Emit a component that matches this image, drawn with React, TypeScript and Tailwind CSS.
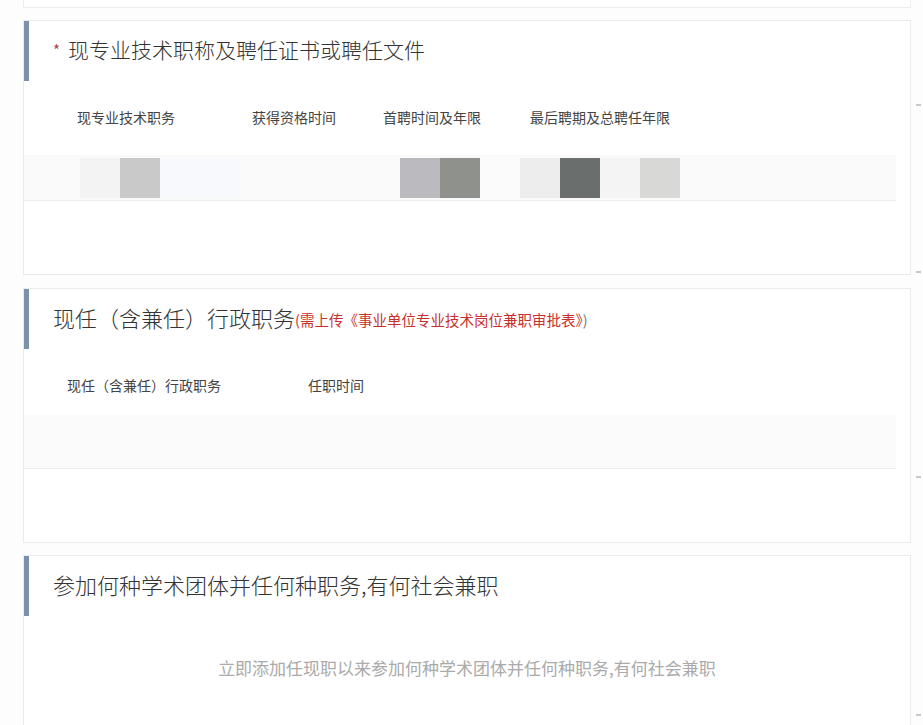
const font = { fontFamily: '"Noto Sans CJK SC", "Liberation Sans", sans-serif' };

function SectionTitle({ children }: { children: React.ReactNode }) {
  return (
    <div className="flex h-[60px] items-center border-l-[5px] border-[#7d91aa] pb-[4px] pl-[24px]">
      {children}
    </div>
  );
}

const mosaic = [
  { w: 56, c: "#fafafa" },
  { w: 40, c: "#f3f3f3" },
  { w: 40, c: "#c9c9c9" },
  { w: 80, c: "#f8f9fc" },
  { w: 160, c: "#fafafa" },
  { w: 40, c: "#bbbabe" },
  { w: 40, c: "#8e918c" },
  { w: 40, c: "#fbfbfb" },
  { w: 40, c: "#ededed" },
  { w: 40, c: "#6a6f6d" },
  { w: 40, c: "#f4f4f4" },
  { w: 40, c: "#d8d9d6" },
];

export default function App() {
  return (
    <div className="relative min-h-screen bg-[#fdfdfd] pl-[23px] pr-[13px]" style={font}>
      {/* cut-off card above */}
      <div className="h-[8px] w-[888px] border-x border-b border-[#ececec] bg-white" />

      {/* professional title */}
      <div className="mt-[12px] box-border h-[255px] w-[888px] border border-[#ebebeb] bg-white">
        <SectionTitle>
          <span className="mr-[8px] text-[15px] leading-none text-[#a94442]">*</span>
          <span className="text-[21px] font-light leading-none text-[#333]">现专业技术职称及聘任证书或聘任文件</span>
        </SectionTitle>
        <div className="mt-[16px] flex h-[40px] items-center text-[14px] text-[#444]">
          <div className="w-[228px] pl-[53px]">现专业技术职务</div>
          <div className="w-[131px]">获得资格时间</div>
          <div className="w-[147px]">首聘时间及年限</div>
          <div>最后聘期及总聘任年限</div>
        </div>
        <div className="mt-[18px] flex h-[46px] w-[872px] items-center border-b border-[#ececec] bg-[#fafafa]">
          {mosaic.map((m, i) => (
            <div key={i} className="h-[40px]" style={{ width: m.w, background: m.c }} />
          ))}
        </div>
      </div>

      {/* administrative post */}
      <div className="mt-[13px] box-border h-[255px] w-[888px] border border-[#ebebeb] bg-white">
        <SectionTitle>
          <span className="text-[22px] font-light leading-none text-[#333]">现任（含兼任）行政职务</span>
          <span className="mt-[6px] text-[14.5px] leading-none text-[#c9302c]">
            (需上传《事业单位专业技术岗位兼职审批表》<span className="text-[#777]">)</span>
          </span>
        </SectionTitle>
        <div className="mt-[16px] flex h-[40px] items-center text-[14px] text-[#444]">
          <div className="w-[284px] pl-[43px]">现任（含兼任）行政职务</div>
          <div>任职时间</div>
        </div>
        <div className="mt-[10px] h-[54px] w-[872px] border-b border-[#ececec] bg-[#fbfbfb]" />
      </div>

      {/* academic groups */}
      <div className="mt-[12px] box-border h-[190px] w-[888px] border border-b-0 border-[#ebebeb] bg-white">
        <SectionTitle>
          <span className="text-[22px] font-light leading-none text-[#333]">参加何种学术团体并任何种职务,有何社会兼职</span>
        </SectionTitle>
        <div className="mt-[43px] text-center text-[17px] leading-none text-[#aaa]">
          立即添加任现职以来参加何种学术团体并任何种职务,有何社会兼职
        </div>
      </div>

      {/* scroll ticks */}
      <div className="absolute right-[2px] top-[104px] h-[2px] w-[5px] bg-[#c8c8c8]" />
      <div className="absolute right-[2px] top-[271px] h-[2px] w-[5px] bg-[#c8c8c8]" />
      <div className="absolute right-[2px] top-[476px] h-[2px] w-[5px] bg-[#c8c8c8]" />
      <div className="absolute right-[2px] top-[714px] h-[2px] w-[5px] bg-[#c8c8c8]" />
    </div>
  );
}
